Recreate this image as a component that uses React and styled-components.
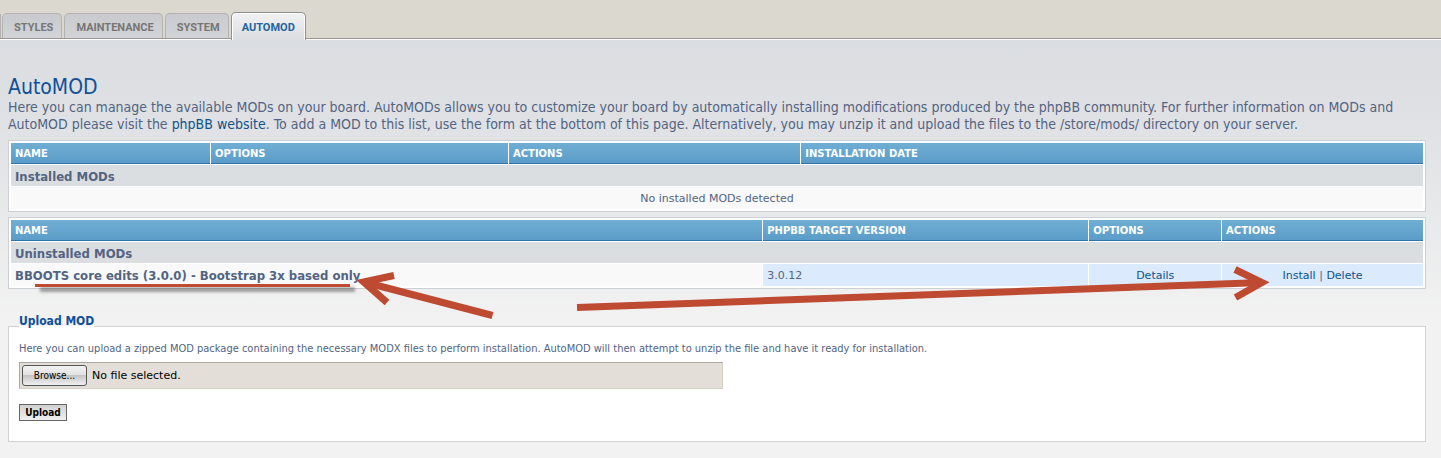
import React from "react";
import styled, { createGlobalStyle } from "styled-components";

const wide = '"DejaVu Sans", Verdana, sans-serif';
const condensed = '"DejaVu Sans Condensed", Tahoma, sans-serif';

const GlobalStyle = createGlobalStyle`
  * { box-sizing: border-box; }
  body {
    margin: 0;
    background: #f2f2f2;
    color: #536482;
    font-family: ${wide};
    font-size: 11px;
  }
`;

const Page = styled.div`
  position: relative;
  overflow: hidden;
`;

const TabBar = styled.nav`
  display: flex;
  align-items: flex-end;
  gap: 2px;
  height: 39px;
  background: #dbd8d0;
  border-bottom: 1px solid #999591;
`;

const Tab = styled.a`
  position: relative;
  height: ${(p) => (p.$active ? 28 : 25)}px;
  margin-bottom: ${(p) => (p.$active ? -2 : 0)}px;
  padding: ${(p) => (p.$active ? "8px 10px 0" : "7px 8px 0 11px")};
  border: 1px solid ${(p) => (p.$active ? "#8f8f8f" : "#b4b3b1")};
  border-bottom: 0;
  border-radius: 5px 5px 0 0;
  background: ${(p) => (p.$active ? "linear-gradient(#f1f2f3, #dadde1)" : "linear-gradient(#c9cacd, #d3d4d7)")};
  box-shadow: ${(p) => (p.$active ? "inset 1px 1px #fff, inset -1px 0 #fff" : "none")};
  color: ${(p) => (p.$active ? "#23649f" : "#767676")};
  font: bold 11px/14px Roboto, Arial, sans-serif;
  text-decoration: none;
  text-transform: uppercase;
`;

const TabEdge = styled.span`
  width: 1px;
  height: 24px;
  margin-right: -1px;
  background: #b4b3b1;
`;

const Main = styled.main`
  padding: 35px 15px 16px 8px;
  border-top: 1px solid #fff;
  background: linear-gradient(#dadde1, #dfe1e4 80px, #f2f2f2 280px);
`;

const Title = styled.h1`
  margin: 0;
  color: #115098;
  font: 21px/24px ${condensed};
`;

const Intro = styled.p`
  margin: 0 0 7px;
  font: 14px/17px ${condensed};
`;

const Link = styled.a`
  color: #105289;
  text-decoration: none;
`;

const TableFrame = styled.div`
  margin-bottom: 5px;
  padding: 2px;
  border: 1px solid #cccfd3;
  background: #fff;
`;

const Table = styled.table`
  width: 100%;
  table-layout: fixed;
  border-collapse: separate;
  border-spacing: 0;
`;

const HeadCell = styled.th`
  width: ${(p) => p.$width};
  height: 22px;
  padding: 0 4px;
  border-bottom: 1px solid #fff;
  background: linear-gradient(#70aed3, #5a9cc8);
  background-clip: padding-box;
  box-shadow: inset 0 -1px #2f75a8;
  color: #fff;
  font-size: 10px;
  line-height: 12px;
  text-align: left;
  text-transform: uppercase;
  & + & { border-left: 1px solid #fff; }
`;

const GroupCell = styled.th`
  height: 22px;
  padding: 2px 4px 0;
  border-bottom: 1px solid #fff;
  background: #dbdee1;
  font: bold 13px/16px ${condensed};
  text-align: left;
`;

const Cell = styled.td`
  height: 22px;
  padding: 2px 4px 0;
  background: ${(p) => (p.$blue ? "#dceafe" : "#f9f9f9")};
  font: ${(p) => (p.$strong ? `bold 13px/16px ${condensed}` : `11px/16px ${wide}`)};
  text-align: ${(p) => (p.$center ? "center" : "left")};
  & + & { border-left: 1px solid #fff; }
`;

const UploadForm = styled.form`
  margin-top: 25px;
`;

const Fieldset = styled.fieldset`
  min-width: 0;
  margin: 0;
  padding: 0 10px 20px;
  border: 1px solid #d0d2d3;
  background: #fff;
`;

const Legend = styled.legend`
  height: 24px;
  padding: 0;
  color: #115098;
  font: bold 12px/15px ${condensed};
`;

const Hint = styled.p`
  margin: 4px 0 6px;
  font: 11px/14px ${condensed};
`;

const FilePicker = styled.label`
  position: relative;
  display: flex;
  align-items: center;
  gap: 5px;
  width: 704px;
  max-width: 100%;
  height: 27px;
  padding: 0 2px;
  border: 1px solid #d5d3c8;
  border-top-color: #aaa7a2;
  border-left-color: #aaa7a2;
  background: #e3ded8;
  color: #000;
  font-size: 11px;
`;

const FileInput = styled.input`
  position: absolute;
  inset: 0;
  width: 100%;
  opacity: 0;
`;

const BrowseFace = styled.span`
  width: 65px;
  height: 21px;
  border: 1px solid #555;
  border-radius: 3px;
  background: linear-gradient(#f3f3f3, #e2e2e2 45%, #c4c4c4 50%, #f0f0f0);
  font: 10px/19px ${condensed};
  text-align: center;
`;

const UploadButton = styled.button`
  display: block;
  width: 48px;
  height: 17px;
  margin-top: 15px;
  padding: 0;
  border: 1px solid #666;
  background: linear-gradient(#d2d2d2, #efefef);
  color: #000;
  font: bold 10px/15px ${condensed};
`;

const Annotations = styled.svg`
  position: absolute;
  top: 0;
  left: 0;
  pointer-events: none;
`;

function ModTable({ columns, group, children }) {
  return (
    <TableFrame>
      <Table>
        <thead>
          <tr>
            {columns.map(([label, width]) => (
              <HeadCell key={label} scope="col" $width={width}>{label}</HeadCell>
            ))}
          </tr>
        </thead>
        <tbody>
          <tr><GroupCell colSpan={4} scope="colgroup">{group}</GroupCell></tr>
          <tr>{children}</tr>
        </tbody>
      </Table>
    </TableFrame>
  );
}

const installedColumns = [["Name", "14.1%"], ["Options", "21.1%"], ["Actions", "20.7%"], ["Installation date", "44.1%"]];
const uninstalledColumns = [["Name", "53.2%"], ["phpBB target version", "23.1%"], ["Options", "9.4%"], ["Actions", "14.3%"]];

export default function App() {
  return (
    <Page>
      <GlobalStyle />
      <TabBar>
        <TabEdge />
        <Tab href="#styles">Styles</Tab>
        <Tab href="#maintenance">Maintenance</Tab>
        <Tab href="#system">System</Tab>
        <Tab href="#automod" $active>AutoMOD</Tab>
      </TabBar>
      <Main>
        <Title>AutoMOD</Title>
        <Intro>
          Here you can manage the available MODs on your board. AutoMODs allows you to customize your board by
          automatically installing modifications produced by the phpBB community. For further information on MODs and
          AutoMOD please visit the <Link href="#phpbb">phpBB website</Link>. To add a MOD to this list, use the form at
          the bottom of this page. Alternatively, you may unzip it and upload the files to the /store/mods/ directory
          on your server.
        </Intro>
        <ModTable columns={installedColumns} group="Installed MODs">
          <Cell colSpan={4} $center>No installed MODs detected</Cell>
        </ModTable>
        <ModTable columns={uninstalledColumns} group="Uninstalled MODs">
          <Cell $strong>BBOOTS core edits (3.0.0) - Bootstrap 3x based only</Cell>
          <Cell $blue>3.0.12</Cell>
          <Cell $blue $center><Link href="#details">Details</Link></Cell>
          <Cell $blue $center>
            <Link href="#install">Install</Link> | <Link href="#delete">Delete</Link>
          </Cell>
        </ModTable>
        <UploadForm onSubmit={(e) => e.preventDefault()}>
          <Fieldset>
            <Legend>Upload MOD</Legend>
            <Hint>
              Here you can upload a zipped MOD package containing the necessary MODX files to perform installation.
              AutoMOD will then attempt to unzip the file and have it ready for installation.
            </Hint>
            <FilePicker>
              <FileInput type="file" />
              <BrowseFace>Browse...</BrowseFace>
              <span>No file selected.</span>
            </FilePicker>
            <UploadButton type="submit">Upload</UploadButton>
          </Fieldset>
        </UploadForm>
      </Main>
      <Annotations width="1441" height="458" viewBox="0 0 1441 458" aria-hidden="true">
        <defs>
          <filter id="soft" x="-5%" y="-200%" width="110%" height="500%">
            <feGaussianBlur stdDeviation="1.5" />
          </filter>
        </defs>
        <rect x="40" y="287" width="315" height="5" fill="#000" opacity="0.35" filter="url(#soft)" />
        <rect x="35" y="284" width="315" height="3" fill="#bf4a32" />
        <g fill="none" stroke="#bf4a32" strokeWidth="7">
          <path d="M492.500 315.500L364 282" />
          <path d="M394 275.500L363.600 282L387 302.500" />
          <path d="M577 307.500L1262 282.600" />
          <path d="M1235 269.500L1262 282.500L1235.500 297.500" />
        </g>
      </Annotations>
    </Page>
  );
}
